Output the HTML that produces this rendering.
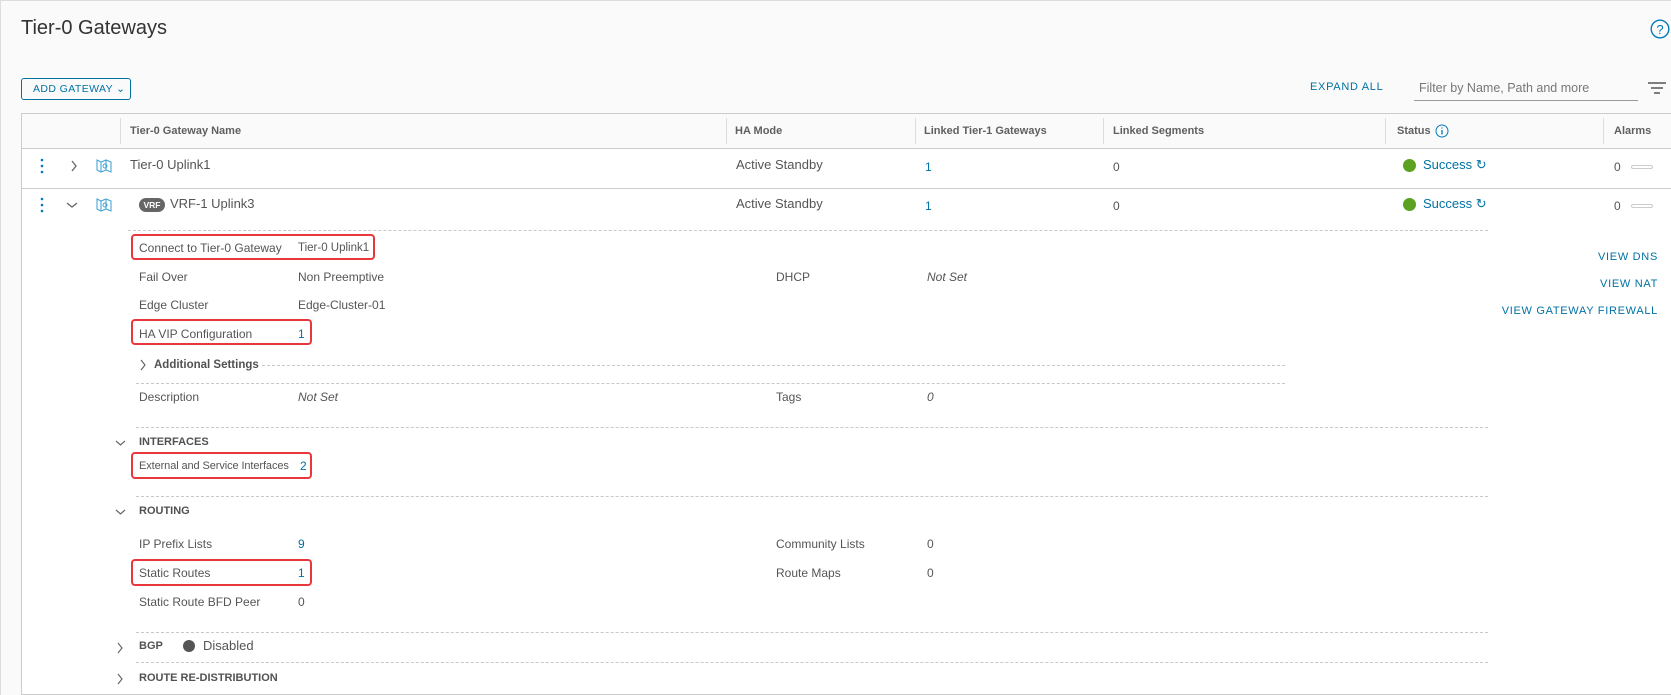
<!DOCTYPE html>
<html><head><meta charset="utf-8"><style>
*{margin:0;padding:0;box-sizing:border-box}
body{width:1671px;height:695px;background:#fafafa;font-family:"Liberation Sans",sans-serif;color:#555;font-size:12px;position:relative;overflow:hidden}
.a{position:absolute;white-space:nowrap;line-height:16px}
.b{color:#0072a3}
.h{font-size:11px;color:#444;font-weight:bold;opacity:.85}
.d{position:absolute;border-top:1px dashed #c8c8c8;height:0}
.box{position:absolute;border:2px solid #e8383d;border-radius:4px}
.i{font-style:italic}
.up{font-weight:bold;font-size:11px;color:#333;opacity:.85}
.lnk{color:#0072a3;font-size:11px;letter-spacing:.7px}
</style></head><body>
<div style="position:absolute;left:0;top:0;width:1671px;height:1px;background:#ddd"></div>
<div style="position:absolute;left:0;top:0;width:1px;height:695px;background:#ddd"></div>
<div class="a" style="left:21px;top:16px;font-size:20px;line-height:24px;color:#333">Tier-0 Gateways</div>
<svg class="a" style="left:1650px;top:19px" width="20" height="20"><circle cx="10" cy="10" r="8.8" fill="none" stroke="#0079b8" stroke-width="1.4"/><text x="10" y="15" font-size="13" text-anchor="middle" fill="#0079b8" font-family="Liberation Sans">?</text></svg>
<div class="a lnk" style="left:21px;top:78px;width:110px;height:22px;border:1px solid #0072a3;border-radius:3px;line-height:20px;font-size:10.5px;padding-left:11px;letter-spacing:.4px">ADD GATEWAY ⌄</div>
<div class="a lnk" style="left:1310px;top:79px">EXPAND ALL</div>
<div class="a" style="left:1414px;top:80px;width:224px;height:21px;border-bottom:1px solid #999;padding-left:5px;color:#777;font-size:12.5px">Filter by Name, Path and more</div>
<svg class="a" style="left:1647px;top:81px" width="20" height="14"><path d="M1 2h18M4 7h12M7 12h6" stroke="#555" stroke-width="1.5"/></svg>

<div style="position:absolute;left:21px;top:113px;width:1650px;height:582px;background:#fff;border:1px solid #ccc;border-right:none"></div>
<div style="position:absolute;left:22px;top:114px;width:1649px;height:35px;background:#fafafa;border-bottom:1px solid #ccc"></div>
<div style="position:absolute;left:22px;top:188px;width:1649px;height:1px;background:#ccc"></div>
<div style="position:absolute;left:120px;top:118px;width:1px;height:26px;background:#ddd"></div>
<div style="position:absolute;left:726px;top:118px;width:1px;height:26px;background:#ddd"></div>
<div style="position:absolute;left:915px;top:118px;width:1px;height:26px;background:#ddd"></div>
<div style="position:absolute;left:1103px;top:118px;width:1px;height:26px;background:#ddd"></div>
<div style="position:absolute;left:1385px;top:118px;width:1px;height:26px;background:#ddd"></div>
<div style="position:absolute;left:1603px;top:118px;width:1px;height:26px;background:#ddd"></div>
<div class="a h" style="left:130px;top:123px">Tier-0 Gateway Name</div>
<div class="a h" style="left:735px;top:123px">HA Mode</div>
<div class="a h" style="left:924px;top:123px">Linked Tier-1 Gateways</div>
<div class="a h" style="left:1113px;top:123px">Linked Segments</div>
<div class="a h" style="left:1397px;top:123px">Status</div>
<svg class="a" style="left:1435px;top:124px" width="14" height="14"><circle cx="7" cy="7" r="6" fill="none" stroke="#0079b8"/><path d="M7 6v4.5M7 3.5v1" stroke="#0079b8" stroke-width="1.3"/></svg>
<div class="a h" style="left:1614px;top:123px">Alarms</div>

<svg class="a" style="left:39px;top:158px" width="6" height="16"><circle cx="3" cy="2" r="1.3" fill="#0079b8"/><circle cx="3" cy="8" r="1.3" fill="#0079b8"/><circle cx="3" cy="14" r="1.3" fill="#0079b8"/></svg>
<svg class="a" style="left:39px;top:197px" width="6" height="16"><circle cx="3" cy="2" r="1.3" fill="#0079b8"/><circle cx="3" cy="8" r="1.3" fill="#0079b8"/><circle cx="3" cy="14" r="1.3" fill="#0079b8"/></svg>
<svg class="a" style="left:70px;top:160px" width="8" height="12"><path d="M2 1l4 5-4 5" fill="none" stroke="#666" stroke-width="1.3"/></svg>
<svg class="a" style="left:66px;top:201px" width="12" height="8"><path d="M1 2l5 4 5-4" fill="none" stroke="#666" stroke-width="1.3"/></svg>
<svg class="a" style="left:96px;top:158px" width="16" height="15"><path d="M1 2l4 2 5-2 5 2v10l-5-2-5 2-4-2z M5 4v10 M10 2v10" fill="none" stroke="#49a6d4" stroke-width="1.1"/><circle cx="9" cy="8" r="2" fill="none" stroke="#49a6d4"/></svg>
<svg class="a" style="left:96px;top:197px" width="16" height="15"><path d="M1 2l4 2 5-2 5 2v10l-5-2-5 2-4-2z M5 4v10 M10 2v10" fill="none" stroke="#49a6d4" stroke-width="1.1"/><circle cx="9" cy="8" r="2" fill="none" stroke="#49a6d4"/></svg>
<div class="a" style="left:130px;top:157px;font-size:13px;color:#555">Tier-0 Uplink1</div>
<div class="a" style="left:139px;top:198px;width:26px;height:14px;border-radius:7px;background:#666;color:#fff;font-size:8.5px;font-weight:bold;line-height:14px;text-align:center">VRF</div>
<div class="a" style="left:170px;top:196px;font-size:13px;color:#555">VRF-1 Uplink3</div>
<div class="a" style="left:736px;top:157px;font-size:13px;color:#555">Active Standby</div>
<div class="a" style="left:736px;top:196px;font-size:13px;color:#555">Active Standby</div>
<div class="a b" style="left:925px;top:159px">1</div>
<div class="a b" style="left:925px;top:198px">1</div>
<div class="a" style="left:1113px;top:159px">0</div>
<div class="a" style="left:1113px;top:198px">0</div>
<div class="a" style="left:1403px;top:159px;width:13px;height:13px;border-radius:50%;background:#5aa220"></div>
<div class="a" style="left:1403px;top:198px;width:13px;height:13px;border-radius:50%;background:#5aa220"></div>
<div class="a b" style="left:1423px;top:157px;font-size:13px">Success ↻</div>
<div class="a b" style="left:1423px;top:196px;font-size:13px">Success ↻</div>
<div class="a" style="left:1614px;top:159px">0</div>
<div class="a" style="left:1614px;top:198px">0</div>
<div class="a" style="left:1631px;top:165px;width:22px;height:4px;border:1px solid #ccc;border-radius:2px"></div>
<div class="a" style="left:1631px;top:204px;width:22px;height:4px;border:1px solid #ccc;border-radius:2px"></div>

<div class="d" style="left:128px;top:230px;width:1360px"></div>
<div class="a" style="left:139px;top:240px">Connect to Tier-0 Gateway</div><div class="a" style="left:298px;top:240px;font-size:11.5px">Tier-0 Uplink1</div>
<div class="box" style="left:131px;top:234px;width:244px;height:26px"></div>
<div class="a" style="left:139px;top:269px">Fail Over</div><div class="a" style="left:298px;top:269px">Non Preemptive</div>
<div class="a" style="left:776px;top:269px">DHCP</div><div class="a i" style="left:927px;top:269px">Not Set</div>
<div class="a" style="left:139px;top:297px">Edge Cluster</div><div class="a" style="left:298px;top:297px">Edge-Cluster-01</div>
<div class="a" style="left:139px;top:326px">HA VIP Configuration</div><div class="a b" style="left:298px;top:326px">1</div>
<div class="box" style="left:131px;top:319px;width:181px;height:26px"></div>
<svg class="a" style="left:139px;top:359px" width="8" height="12"><path d="M2 1l4 5-4 5" fill="none" stroke="#666" stroke-width="1.2"/></svg>
<div class="a up" style="left:154px;top:357px;font-size:11.5px">Additional Settings</div>
<div class="d" style="left:262px;top:365px;width:1023px"></div>
<div class="d" style="left:136px;top:383px;width:1149px"></div>
<div class="a" style="left:139px;top:389px">Description</div><div class="a i" style="left:298px;top:389px">Not Set</div>
<div class="a" style="left:776px;top:389px">Tags</div><div class="a i" style="left:927px;top:389px">0</div>
<div class="d" style="left:136px;top:427px;width:1352px"></div>
<svg class="a" style="left:115px;top:439px" width="11" height="8"><path d="M1 2l4.5 4 4.5-4" fill="none" stroke="#666" stroke-width="1.2"/></svg>
<div class="a up" style="left:139px;top:434px">INTERFACES</div>
<div class="a" style="left:139px;top:458px;font-size:11px;letter-spacing:-.1px">External and Service Interfaces</div><div class="a b" style="left:300px;top:458px">2</div>
<div class="box" style="left:131px;top:452px;width:181px;height:27px"></div>
<div class="d" style="left:136px;top:496px;width:1352px"></div>
<svg class="a" style="left:115px;top:508px" width="11" height="8"><path d="M1 2l4.5 4 4.5-4" fill="none" stroke="#666" stroke-width="1.2"/></svg>
<div class="a up" style="left:139px;top:503px">ROUTING</div>
<div class="a" style="left:139px;top:536px">IP Prefix Lists</div><div class="a b" style="left:298px;top:536px">9</div>
<div class="a" style="left:776px;top:536px">Community Lists</div><div class="a" style="left:927px;top:536px">0</div>
<div class="a" style="left:139px;top:565px">Static Routes</div><div class="a b" style="left:298px;top:565px">1</div>
<div class="a" style="left:776px;top:565px">Route Maps</div><div class="a" style="left:927px;top:565px">0</div>
<div class="box" style="left:131px;top:559px;width:181px;height:27px"></div>
<div class="a" style="left:139px;top:594px">Static Route BFD Peer</div><div class="a" style="left:298px;top:594px">0</div>
<div class="d" style="left:136px;top:632px;width:1352px"></div>
<svg class="a" style="left:116px;top:642px" width="8" height="12"><path d="M2 1l4 5-4 5" fill="none" stroke="#666" stroke-width="1.2"/></svg>
<div class="a up" style="left:139px;top:638px">BGP</div>
<div class="a" style="left:183px;top:640px;width:12px;height:12px;border-radius:50%;background:#555"></div>
<div class="a" style="left:203px;top:638px;font-size:13px">Disabled</div>
<div class="d" style="left:136px;top:662px;width:1352px"></div>
<svg class="a" style="left:116px;top:673px" width="8" height="12"><path d="M2 1l4 5-4 5" fill="none" stroke="#666" stroke-width="1.2"/></svg>
<div class="a up" style="left:139px;top:670px">ROUTE RE-DISTRIBUTION</div>
<div style="position:absolute;left:21px;top:694px;width:1650px;height:1px;background:#ccc"></div>

<div class="a lnk" style="right:13px;top:249px">VIEW DNS</div>
<div class="a lnk" style="right:13px;top:276px">VIEW NAT</div>
<div class="a lnk" style="right:13px;top:303px">VIEW GATEWAY FIREWALL</div>
</body></html>
